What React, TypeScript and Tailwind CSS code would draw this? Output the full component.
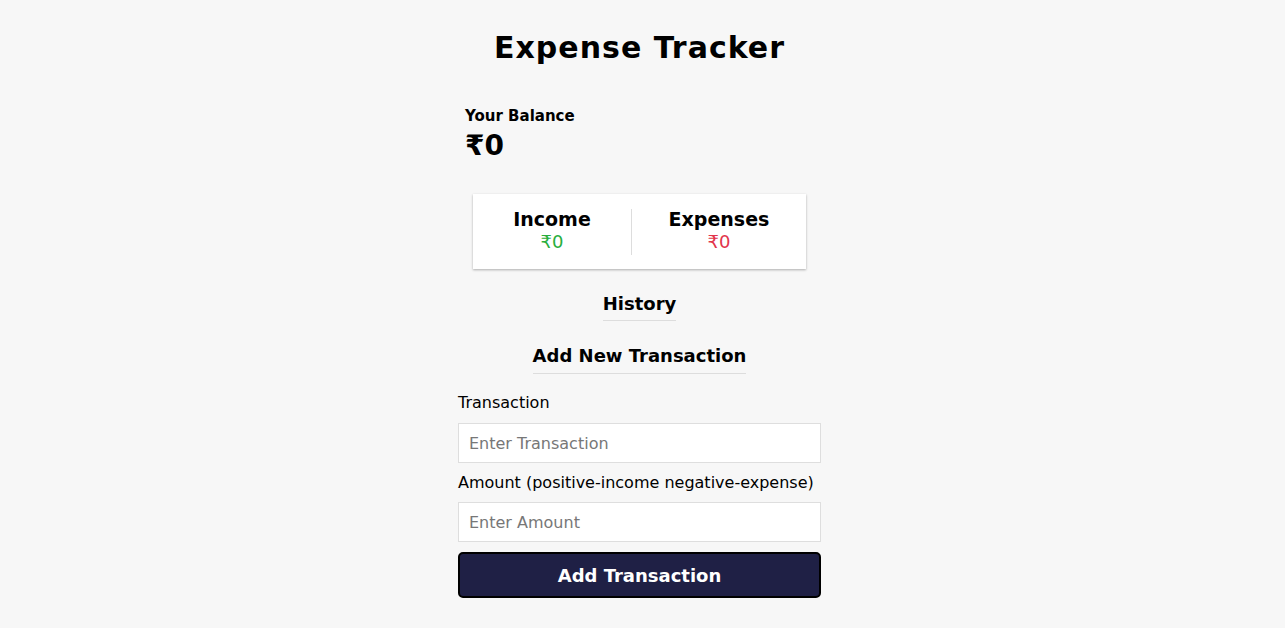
import React from "react";

export default function App() {
  return (
    <div className="min-h-screen w-full bg-[#f7f7f7] pr-[6px] font-['DejaVu_Sans',sans-serif] text-black">
      <div className="mx-auto flex w-[363px] flex-col pt-[28px]">
        <h1 className="text-center text-[30px] font-bold leading-[40px] tracking-[1px]">
          Expense Tracker
        </h1>
        <div className="mt-[38px] pl-[7px]">
          <h4 className="text-[15px] font-bold leading-[20px]">Your Balance</h4>
          <div className="mt-[3px] text-[28px] font-bold leading-[34px]">₹0</div>
        </div>
        <div className="mx-[15px] mt-[31px] flex h-[75px] items-center bg-white pb-[4px] shadow-[0_1px_3px_rgba(0,0,0,0.12),0_1px_2px_rgba(0,0,0,0.2)]">
          <div className="flex w-[158px] shrink-0 flex-col items-center">
            <h4 className="text-[19px] font-bold leading-[24px]">Income</h4>
            <p className="text-[18px] leading-[22px] text-[#2aae3d]">₹0</p>
          </div>
          <div className="mt-[4px] h-[46px] w-px bg-[#dddddd]" />
          <div className="flex flex-1 flex-col items-center">
            <h4 className="text-[19px] font-bold leading-[24px]">Expenses</h4>
            <p className="text-[18px] leading-[22px] text-[#e2344b]">₹0</p>
          </div>
        </div>
        <div className="mt-[23px] flex justify-center">
          <h3 className="border-b border-[#dddddd] pb-[4px] text-[18px] font-bold leading-[24px]">
            History
          </h3>
        </div>
        <div className="mt-[23px] flex justify-center">
          <h3 className="border-b border-[#dddddd] pb-[5px] text-[18px] font-bold leading-[24px]">
            Add New Transaction
          </h3>
        </div>
        <form className="mt-[18px] flex flex-col" onSubmit={(e) => e.preventDefault()}>
          <label className="text-[16px] leading-[22px]">Transaction</label>
          <input
            type="text"
            placeholder="Enter Transaction"
            className="mt-[9px] h-[40px] w-full border border-[#dedede] bg-white px-[10px] text-[16px] placeholder:text-[#777]"
          />
          <label className="mt-[9px] text-[16px] leading-[22px]">Amount (positive-income negative-expense)</label>
          <input
            type="text"
            placeholder="Enter Amount"
            className="mt-[8px] h-[40px] w-full border border-[#dedede] bg-white px-[10px] text-[16px] placeholder:text-[#777]"
          />
          <button
            type="submit"
            className="mt-[10px] h-[46px] w-full rounded-[5px] border-2 border-black bg-[#1f2045] text-[18px] font-bold text-white"
          >
            Add Transaction
          </button>
        </form>
      </div>
    </div>
  );
}
